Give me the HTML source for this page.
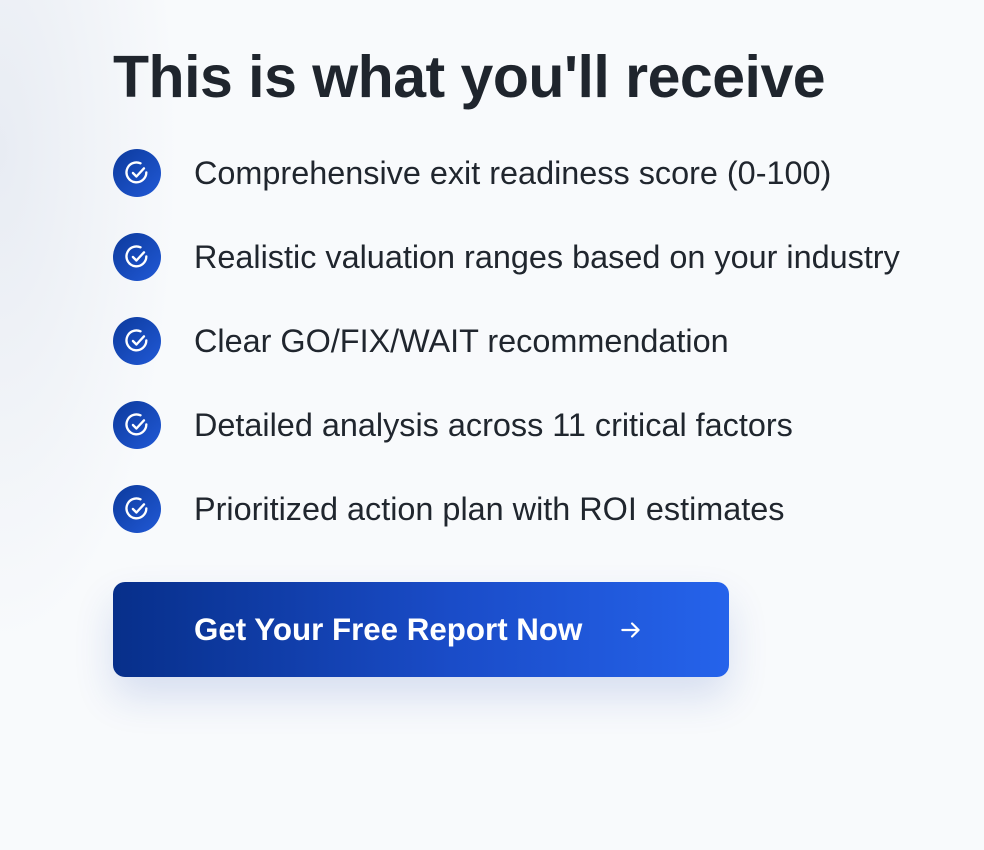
<!DOCTYPE html>
<html><head><style>
html,body{margin:0;padding:0}
body{width:984px;height:850px;overflow:hidden;background:#f8fafc;font-family:"Liberation Sans",sans-serif;position:relative}
.bg{position:absolute;inset:0;background:radial-gradient(ellipse 180px 500px at 0 150px,#e8ecf3,rgba(248,250,252,0))}
h1{position:absolute;left:113px;top:42px;margin:0;font-size:59px;font-weight:700;color:#1f252d;letter-spacing:-0.5px;line-height:70px}
.item{position:absolute;left:113px;height:48px;display:flex;align-items:center}
.ic{width:48px;height:48px;border-radius:50%;background:linear-gradient(135deg,#0c3a9c,#2159d6);display:flex;align-items:center;justify-content:center}
.item span{margin-left:33px;font-size:32.4px;color:#20262e}
.btn{position:absolute;left:113px;top:582px;width:616px;height:95px;border-radius:12px;background:linear-gradient(90deg,#072f8a,#1a4cc8 55%,#2563eb);box-shadow:0 20px 40px rgba(30,64,175,0.15);color:#fff;font-weight:700;font-size:31.3px;display:flex;align-items:center}
.btn span{margin-left:81px}
</style></head><body>
<div class="bg"></div>
<h1>This is what you'll receive</h1>
<div class="item" style="top:149px"><div class="ic"><svg width="28" height="28" viewBox="0 0 24 24" fill="none" stroke="#fff" stroke-width="2" stroke-linecap="round" stroke-linejoin="round"><path d="M20 11.5A8.5 8.5 0 1 1 15 3.7"/><path d="M8.5 12l3 3 6.5-7"/></svg></div><span>Comprehensive exit readiness score (0-100)</span></div>
<div class="item" style="top:233px"><div class="ic"><svg width="28" height="28" viewBox="0 0 24 24" fill="none" stroke="#fff" stroke-width="2" stroke-linecap="round" stroke-linejoin="round"><path d="M20 11.5A8.5 8.5 0 1 1 15 3.7"/><path d="M8.5 12l3 3 6.5-7"/></svg></div><span>Realistic valuation ranges based on your industry</span></div>
<div class="item" style="top:317px"><div class="ic"><svg width="28" height="28" viewBox="0 0 24 24" fill="none" stroke="#fff" stroke-width="2" stroke-linecap="round" stroke-linejoin="round"><path d="M20 11.5A8.5 8.5 0 1 1 15 3.7"/><path d="M8.5 12l3 3 6.5-7"/></svg></div><span>Clear GO/FIX/WAIT recommendation</span></div>
<div class="item" style="top:401px"><div class="ic"><svg width="28" height="28" viewBox="0 0 24 24" fill="none" stroke="#fff" stroke-width="2" stroke-linecap="round" stroke-linejoin="round"><path d="M20 11.5A8.5 8.5 0 1 1 15 3.7"/><path d="M8.5 12l3 3 6.5-7"/></svg></div><span>Detailed analysis across 11 critical factors</span></div>
<div class="item" style="top:485px"><div class="ic"><svg width="28" height="28" viewBox="0 0 24 24" fill="none" stroke="#fff" stroke-width="2" stroke-linecap="round" stroke-linejoin="round"><path d="M20 11.5A8.5 8.5 0 1 1 15 3.7"/><path d="M8.5 12l3 3 6.5-7"/></svg></div><span>Prioritized action plan with ROI estimates</span></div>
<div class="btn"><span>Get Your Free Report Now</span><svg style="margin-left:36px" width="26" height="26" viewBox="0 0 24 24" fill="none" stroke="#fff" stroke-width="2" stroke-linecap="round" stroke-linejoin="round"><path d="M4 12h15M13 6l6 6-6 6"/></svg></div>
</body></html>
